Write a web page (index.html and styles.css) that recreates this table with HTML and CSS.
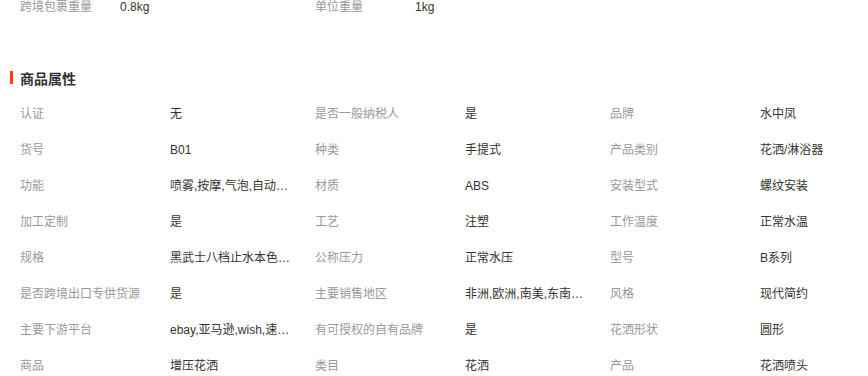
FILE: index.html
```html
<!DOCTYPE html>
<html lang="zh-CN">
<head>
<meta charset="utf-8">
<title>商品属性</title>
<link rel="stylesheet" href="styles.css">
</head>
<body>
<div class="pkg">
  <div class="pkg-item"><span class="pkg-label">跨境包裹重量</span><span class="pkg-value">0.8kg</span></div>
  <div class="pkg-item"><span class="pkg-label">单位重量</span><span class="pkg-value">1kg</span></div>
</div>
<h2 class="title">商品属性</h2>
<div class="attrs">
  <div class="attr"><span class="k">认证</span><span class="v">无</span></div>
  <div class="attr"><span class="k">是否一般纳税人</span><span class="v">是</span></div>
  <div class="attr"><span class="k">品牌</span><span class="v">水中凤</span></div>
  <div class="attr"><span class="k">货号</span><span class="v">B01</span></div>
  <div class="attr"><span class="k">种类</span><span class="v">手提式</span></div>
  <div class="attr"><span class="k">产品类别</span><span class="v">花洒/淋浴器</span></div>
  <div class="attr"><span class="k">功能</span><span class="v">喷雾,按摩,气泡,自动断水</span></div>
  <div class="attr"><span class="k">材质</span><span class="v">ABS</span></div>
  <div class="attr"><span class="k">安装型式</span><span class="v">螺纹安装</span></div>
  <div class="attr"><span class="k">加工定制</span><span class="v">是</span></div>
  <div class="attr"><span class="k">工艺</span><span class="v">注塑</span></div>
  <div class="attr"><span class="k">工作温度</span><span class="v">正常水温</span></div>
  <div class="attr"><span class="k">规格</span><span class="v">黑武士八档止水本色软管套装</span></div>
  <div class="attr"><span class="k">公称压力</span><span class="v">正常水压</span></div>
  <div class="attr"><span class="k">型号</span><span class="v">B系列</span></div>
  <div class="attr"><span class="k">是否跨境出口专供货源</span><span class="v">是</span></div>
  <div class="attr"><span class="k">主要销售地区</span><span class="v">非洲,欧洲,南美,东南亚,北美</span></div>
  <div class="attr"><span class="k">风格</span><span class="v">现代简约</span></div>
  <div class="attr"><span class="k">主要下游平台</span><span class="v">ebay,亚马逊,wish,速卖通</span></div>
  <div class="attr"><span class="k">有可授权的自有品牌</span><span class="v">是</span></div>
  <div class="attr"><span class="k">花洒形状</span><span class="v">圆形</span></div>
  <div class="attr"><span class="k">商品</span><span class="v">增压花洒</span></div>
  <div class="attr"><span class="k">类目</span><span class="v">花洒</span></div>
  <div class="attr"><span class="k">产品</span><span class="v">花洒喷头</span></div>
</div>
</body>
</html>
```
FILE: styles.css
```css
* { box-sizing: border-box; }
html, body { margin: 0; padding: 0; background: #fff; }
body {
  padding-top: 1px;
  font-family: "Liberation Sans", "Noto Sans CJK SC", sans-serif;
  font-size: 12px;
  color: #333;
  overflow: hidden;
}
.pkg {
  display: flex;
  padding-left: 20px;
  height: 12px;
  line-height: 12px;
}
.pkg-item { display: flex; width: 295px; }
.pkg-label { width: 100px; color: #999; }
.pkg-value { color: #333; }
.title {
  margin: 56px 0 0 10px;
  padding-left: 10px;
  font-size: 14px;
  font-weight: bold;
  line-height: 20px;
  height: 20px;
  color: #333;
  position: relative;
}
.title::before {
  content: "";
  position: absolute;
  left: 0;
  top: 2px;
  width: 3px;
  height: 13px;
  background: #ff4400;
}
.attrs {
  margin-top: 7px;
  padding-left: 20px;
  display: grid;
  grid-template-columns: repeat(3, 295px);
}
.attr {
  display: flex;
  height: 36px;
  line-height: 36px;
}
.k { width: 150px; color: #999; white-space: nowrap; }
.v {
  width: 126px;
  color: #333;
  white-space: nowrap;
  overflow: hidden;
  text-overflow: ellipsis;
}
```
